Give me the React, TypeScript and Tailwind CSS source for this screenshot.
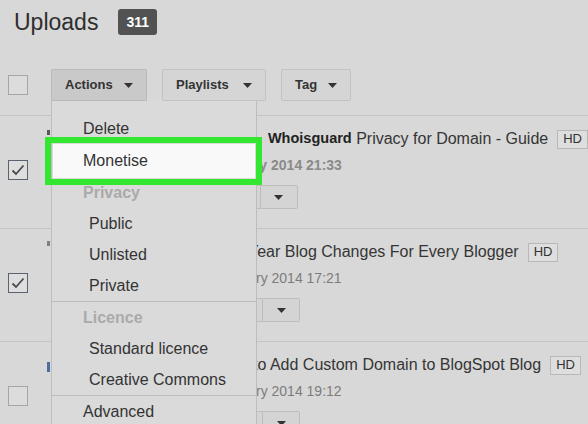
import React from "react";

type Row = {
  checked: boolean;
  lead: string;
  bold?: string;
  title: string;
  date: string;
  dateBold?: boolean;
  mark: string;
};

const rows: Row[] = [
  {
    checked: true,
    lead: "w-[120px]",
    bold: "Whoisguard",
    title: "\u00a0Privacy for Domain - Guide",
    date: "ry 2014 21:33",
    dateBold: true,
    mark: "h-[5px] mt-[14px] bg-[#55585e]",
  },
  {
    checked: true,
    lead: "w-[98px]",
    title: "Year Blog Changes For Every Blogger",
    date: "ry 2014 17:21",
    mark: "h-[5px] mt-[12px] bg-[#7d8087]",
  },
  {
    checked: false,
    lead: "w-[103px]",
    title: "to Add Custom Domain to BlogSpot Blog",
    date: "ry 2014 19:12",
    mark: "h-[10px] mt-[20px] bg-[#4d6c9e]",
  },
];

function Caret() {
  return (
    <svg width="9" height="5" viewBox="0 0 9 5" className="shrink-0">
      <path d="M0 0h9L4.5 5z" fill="#333" />
    </svg>
  );
}

function ToolButton({ label, width, active }: { label: string; width: string; active?: boolean }) {
  return (
    <div
      className={`${width} h-[32px] flex items-center justify-between px-[13px] border rounded-t-[2px] ${
        active ? "bg-[#c9c9c9] border-[#b9b9b9]" : "bg-[#d5d5d5] border-[#c2c2c2] rounded-b-[2px]"
      }`}
    >
      <span className="text-[13px] font-bold text-[#333]">{label}</span>
      <Caret />
    </div>
  );
}

function Checkbox({ checked }: { checked?: boolean }) {
  return (
    <div
      className={`w-[20px] h-[20px] border flex items-center justify-center ${
        checked ? "border-[#5a6170] bg-[#dedede]" : "border-[#a6a6a6] bg-[#dcdcdc]"
      }`}
    >
      {checked && (
        <svg width="14" height="12" viewBox="0 0 14 12">
          <path d="M1.5 6.5l3.5 3.5L12.5 1.5" fill="none" stroke="#4a4a4a" strokeWidth="1.8" />
        </svg>
      )}
    </div>
  );
}

function MenuItem({ label, sub, header }: { label: string; sub?: boolean; header?: boolean }) {
  return (
    <div
      className={`h-[31px] flex items-center text-base ${sub ? "pl-[37px]" : "pl-[31px]"} ${
        header ? "font-bold text-[#aaaaaa]" : "text-[#333]"
      }`}
    >
      {label}
    </div>
  );
}

export default function App() {
  return (
    <div
      className="relative w-[588px] h-[424px] overflow-hidden bg-[#d8d8d8]"
      style={{ fontFamily: '"Liberation Sans", Arial, sans-serif' }}
    >
      <div className="h-[38px] pt-[6px] pl-[14px] flex items-center">
        <h1 className="text-[23px] leading-[28px] text-[#2e2e2e]">Uploads</h1>
        <span className="ml-[20px] h-[26px] px-[8px] flex items-center rounded-[3px] bg-[#525252] text-white text-[14px] font-bold">
          311
        </span>
      </div>

      <div className="h-[78px] pt-[31px] pl-[8px] border-b border-[#c4c4c4]">
        <div className="flex items-center">
          <Checkbox />
          <div className="ml-[23px] flex gap-[15px]">
            <ToolButton label="Actions" width="w-[96px]" active />
            <ToolButton label="Playlists" width="w-[104px]" />
            <ToolButton label="Tag" width="w-[70px]" />
          </div>
        </div>
      </div>

      {rows.map((r, i) => (
        <div key={i} className="h-[113px] flex border-b border-[#c4c4c4]">
          <div className="pl-[8px] pt-[44px]">
            <Checkbox checked={r.checked} />
          </div>
          {/* thumbnail, mostly under the menu */}
          <div className="ml-[19px] w-[96px] flex">
            <div className={`w-[3px] ${r.mark}`} />
          </div>
          <div className="ml-[7px] pt-[13px] flex flex-col whitespace-nowrap">
            <div className="h-[20px] flex items-center text-base text-[#353535]">
              <span className={`${r.lead} shrink-0`} />
              {r.bold && <span className="text-[14.5px] font-bold text-[#222]">{r.bold}</span>}
              <span>{r.title}</span>
              <span className="ml-[9px] h-[19px] px-[5px] flex items-center border border-[#b8b8b8] bg-[#dedede] text-[13px] text-[#333]">
                HD
              </span>
            </div>
            <div className="mt-[8px] h-[16px] flex items-center text-[14px]">
              <span className="w-[106px] shrink-0" />
              <span className={r.dateBold ? "font-bold text-[#8a8a8a]" : "text-[#7c7c7c]"}>{r.date}</span>
            </div>
            <div className="mt-[12px] flex h-[24px]">
              <div className="w-[113px] border border-[#bdbdbd] bg-[#d4d4d4] rounded-l-[2px]" />
              <div className="w-[37px] border border-l-0 border-[#bdbdbd] bg-[#d4d4d4] rounded-r-[2px] flex items-center justify-center">
                <Caret />
              </div>
            </div>
          </div>
        </div>
      ))}

      <div className="absolute left-[51px] top-[101px] w-[206px] h-[330px] bg-[#dadada] border-x border-[#bdbdbd] pt-[12px]">
        <MenuItem label="Delete" />
        <div className="relative h-[34px] mx-[1px] bg-[#f9f9f9] flex items-center pl-[30px] text-base text-[#333]">
          Monetise
          <span className="absolute -left-[8px] -right-[7px] -top-[7px] -bottom-[7px] border-[6px] border-[#33e62f]" />
        </div>
        <div className="h-[30px] flex items-center pl-[31px] text-base font-bold text-[#aaaaaa]">Privacy</div>
        <div className="border-b border-[#bdbdbd]">
          <MenuItem label="Public" sub />
          <MenuItem label="Unlisted" sub />
          <MenuItem label="Private" sub />
        </div>
        <div className="border-b border-[#bdbdbd]">
          <MenuItem label="Licence" header />
          <MenuItem label="Standard licence" sub />
          <MenuItem label="Creative Commons" sub />
        </div>
        <MenuItem label="Advanced" />
      </div>
    </div>
  );
}
